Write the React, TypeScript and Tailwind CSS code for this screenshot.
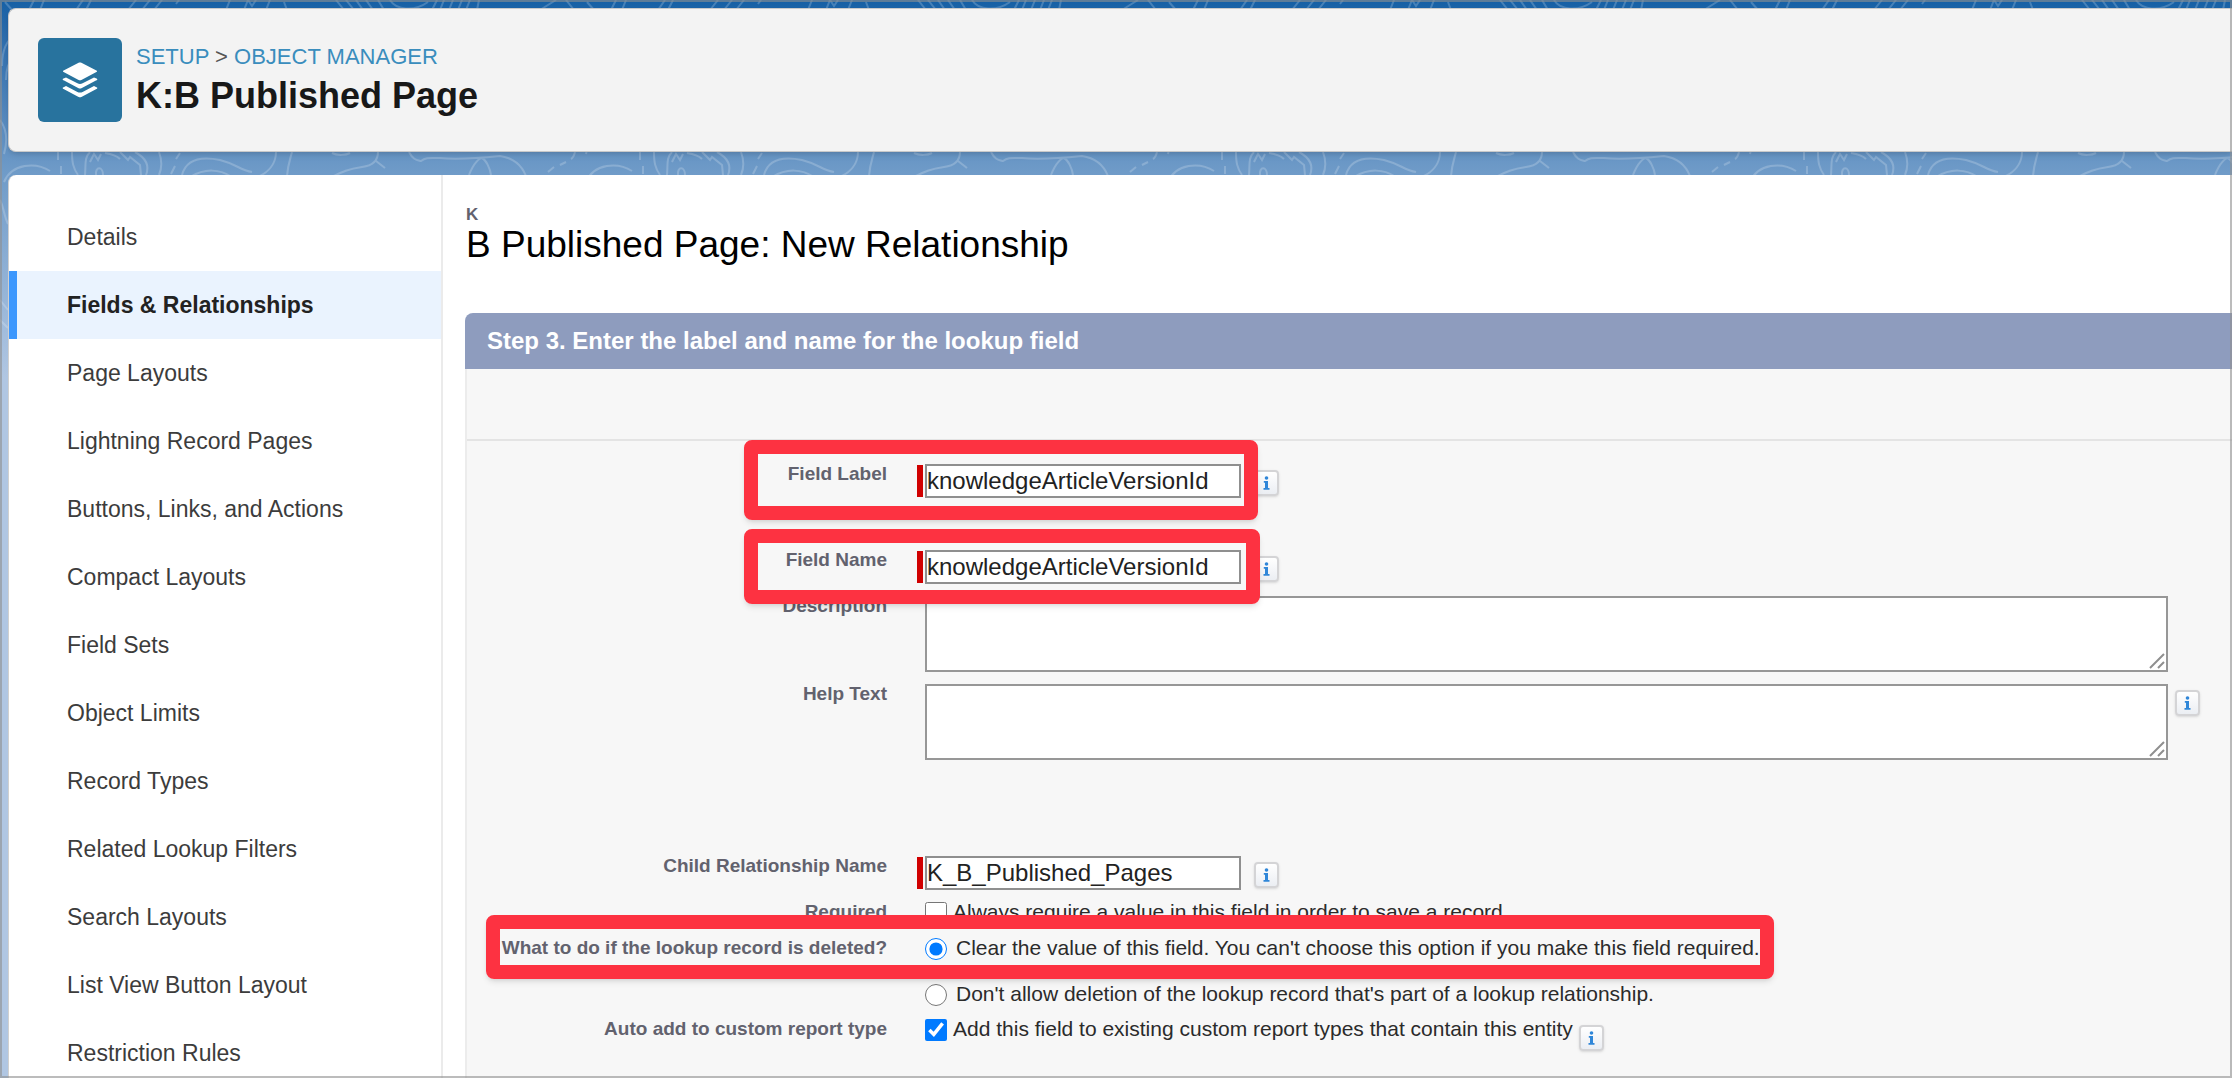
import type { ReactNode } from "react";

const navItems = [
  "Details",
  "Fields & Relationships",
  "Page Layouts",
  "Lightning Record Pages",
  "Buttons, Links, and Actions",
  "Compact Layouts",
  "Field Sets",
  "Object Limits",
  "Record Types",
  "Related Lookup Filters",
  "Search Layouts",
  "List View Button Layout",
  "Restriction Rules",
];

const ObjectIcon = () => (
  <div className="flex size-[84px] shrink-0 items-center justify-center rounded-md bg-[#28739e]">
    <svg width="36" height="36" viewBox="0 0 36 36" fill="#fff">
      <path d="M16.600 .8 1.600 8.400a.9.9 0 0 0 0 1.700l15 7.900c.9.4 1.900.4 2.800 0l15-7.900a.9.9 0 0 0 0-1.700l-15-7.600c-.9-.4-1.900-.4-2.800 0z" />
      <path d="M34.400 16.500 32 15.400 20.600 21.300c-1.600.8-3.600.8-5.200 0L4 15.400 1.600 16.500a.9.9 0 0 0 0 1.800l15 7.900c.9.4 1.900.4 2.800 0l15-7.900a.9.9 0 0 0 0-1.800z" />
      <path d="M34.400 25.200 32 24.100 20.600 30c-1.600.8-3.600.8-5.200 0L4 24.100 1.600 25.200a.9.9 0 0 0 0 1.800l15 7.900c.9.4 1.900.4 2.800 0l15-7.900a.9.9 0 0 0 0-1.800z" />
    </svg>
  </div>
);

// contour lines behind the cards, repeats every 582px
const Contours = () => (
  <svg className="absolute inset-0 h-full w-full" fill="none">
    <defs>
      <pattern id="contours" width="582" height="1078" patternUnits="userSpaceOnUse">
        <g stroke="#fff" strokeOpacity="0.2" strokeWidth="2" fill="none">
          <path d="M12 10 5 2M29 10l5-10M40 10l4-10M76 10l7-10M86 10l5-10M128 10l8-10M142 10l8-10M154 10l8-10M176 4l3-4M226 10l4-10M244 10l4-10l4 6 4-6M266 10l4-10M284 2l3 8M336 0l8 10M346 0l8 10M356 0l7 10M366 0l7 10M378 0l6 10M390 0c6 10 24 12 38 2M432 10l5-10M440 10l4-10M449 10l4-10M458 10l4-10M466 10l4-10M477 10l2-10M540 10l16-10M566 0l8 10" />
          <path d="M16 34C6 40 2 52 2 66M14 56c-6 6-8 14-8 24M0 120c6 8 8 20 4 34M0 200c4 8 4 16 8 24M0 300l8 10M0 320l8 8" />
          <path d="M4 182C12 163 36 162 50 171M58 152v8M61 166v8M72 152c0 10 1 16 6 23M85 175c1-10-1-17 5-23M90 162l4-8 4 6 3-6M96 175c-1-9 7-9 7 0M105 153c6 1 12 3 15 6M120 152l8 8 2-3 10 8 1 10M135 152c11 6 15 13 11 23M159 152c3 8 3 16 0 23M180 153l-4 6M175 166l-4 8M182 175C186 160 200 156 220 160c16 4 20 10 32 12M190 177c15-9 30-8 42 0M276 152c0 12-8 20-16 24M292 152c-2 8-4 12-5 24" />
          <path d="M332 153c6 3 14 2 18 0M378 152c0 10-8 14-16 15-14 2-20 5-28 9M376 161l9 7M409 152c4 8 8 8 12 9 5-4 9-3 19-3 20 2 40 0 60-2 14 2 22 10 26 20M469 175c5-13 11-17 13-17 4 2 8 10 9 17M575 152c-1 4-2 6-4 7M566 162l-6 3M554 167l-6 5" />
        </g>
      </pattern>
    </defs>
    <rect width="100%" height="100%" fill="url(#contours)" />
  </svg>
);

const InfoButton = () => (
  <button
    type="button"
    aria-label="Help"
    className="flex h-[26px] w-[25px] shrink-0 items-center justify-center rounded border-2 border-[#d4d4d6] bg-linear-to-b from-white to-[#ebeef3] shadow-sm"
  >
    <svg width="7" height="14" viewBox="0 0 7 14" fill="#2f86d8">
      <circle cx="3.500" cy="2" r="1.800" />
      <path d="M.8 5h4.200v7h1.500v1.700h-6V12h1.500V6.700H.8z" />
    </svg>
  </button>
);

const Highlight = ({ className }: { className: string }) => (
  <div
    className={`pointer-events-none absolute z-10 rounded-lg border-14 border-[#fd3241] shadow-md ${className}`}
  />
);

const RequiredBar = () => <div className="h-8 w-[6px] bg-[#d00000]" />;

const labelClasses =
  "w-[420px] shrink-0 text-right text-[19px] leading-5 font-bold text-[#62626e]";
const inputClasses =
  "h-[34px] w-[316px] border-2 border-[#8f8f8f] bg-white text-2xl leading-7 text-[#222]";
const optionClasses = "text-[21px] leading-5 text-[#2b2b2b]";

const TextArea = ({ id }: { id: string }) => (
  <div className="relative min-w-0 flex-1">
    <textarea
      id={id}
      className="block h-[76px] w-full resize-none border-2 border-[#979797] bg-white text-2xl"
    />
    <svg
      className="pointer-events-none absolute right-[3px] bottom-[3px]"
      width="16"
      height="16"
      viewBox="0 0 16 16"
      stroke="#8f8f8f"
      strokeWidth="2"
    >
      <path d="M1 15 15 1M9 15l6-6" />
    </svg>
  </div>
);

interface RowProps {
  label?: string;
  htmlFor?: string;
  className: string;
  required?: boolean;
  highlight?: string;
  children: ReactNode;
}

const Row = ({ label, htmlFor, className, required, highlight, children }: RowProps) => (
  <div className={`relative flex items-start ${className}`}>
    {label ? (
      <label htmlFor={htmlFor} className={labelClasses}>
        {label}
      </label>
    ) : (
      <div className="w-[420px] shrink-0" />
    )}
    <div className="flex w-[38px] shrink-0 justify-end pt-[1px] pr-[2px]">
      {required && <RequiredBar />}
    </div>
    {children}
    {highlight && <Highlight className={highlight} />}
  </div>
);

const Sidebar = () => (
  <nav className="w-[434px] shrink-0 border-r-2 border-[#ebebeb] pt-7">
    <ul>
      {navItems.map((item) => (
        <li key={item}>
          <a
            href="#"
            className={`flex h-[68px] items-center border-l-8 pl-[50px] text-[23px] ${
              item === "Fields & Relationships"
                ? "border-[#3c97fd] bg-[#eaf3fe] font-bold text-[#222]"
                : "border-transparent text-[#3c3c3c]"
            }`}
          >
            {item}
          </a>
        </li>
      ))}
    </ul>
  </nav>
);

const FieldForm = () => (
  <form className="flex-1 border-l-2 border-[#ececec] bg-[#f7f7f7]">
    <div className="h-[72px] border-b-2 border-[#e4e4e4]" />
    <div className="pt-[23px]">
      <Row
        label="Field Label"
        htmlFor="label"
        required
        className="h-[86px]"
        highlight="-top-6 left-[277px] h-20 w-[514px]"
      >
        <input id="label" defaultValue="knowledgeArticleVersionId" className={inputClasses} />
        <div className="pt-[6px] pl-[13px]">
          <InfoButton />
        </div>
      </Row>
      <Row
        label="Field Name"
        htmlFor="name"
        required
        className="h-[46px]"
        highlight="-top-[21px] left-[277px] h-[75px] w-[516px]"
      >
        <input id="name" defaultValue="knowledgeArticleVersionId" className={inputClasses} />
        <div className="pt-[6px] pl-[13px]">
          <InfoButton />
        </div>
      </Row>
      <Row label="Description" htmlFor="description" className="h-[88px] pr-16">
        <TextArea id="description" />
      </Row>
      <Row label="Help Text" htmlFor="help" className="h-[172px] pr-8">
        <TextArea id="help" />
        <div className="pt-[6px] pl-[7px]">
          <InfoButton />
        </div>
      </Row>
      <Row label="Child Relationship Name" htmlFor="child" required className="h-[46px]">
        <input id="child" defaultValue="K_B_Published_Pages" className={inputClasses} />
        <div className="pt-[6px] pl-[13px]">
          <InfoButton />
        </div>
      </Row>
      <Row label="Required" htmlFor="required" className="h-9">
        <input id="required" type="checkbox" className="mr-[6px] size-[22px]" />
        <label htmlFor="required" className={optionClasses}>
          Always require a value in this field in order to save a record.
        </label>
      </Row>
      <Row
        label="What to do if the lookup record is deleted?"
        htmlFor="clear"
        className="h-[46px]"
        highlight="-top-[23px] left-[19px] h-16 w-[1288px]"
      >
        <input
          id="clear"
          type="radio"
          name="deleted"
          defaultChecked
          className="mr-[9px] size-[22px] accent-[#007aff]"
        />
        <label htmlFor="clear" className={optionClasses}>
          Clear the value of this field. You can't choose this option if you make this field
          required.
        </label>
      </Row>
      <Row className="h-[35px]">
        <input id="restrict" type="radio" name="deleted" className="mr-[9px] size-[22px]" />
        <label htmlFor="restrict" className={optionClasses}>
          Don't allow deletion of the lookup record that's part of a lookup relationship.
        </label>
      </Row>
      <Row label="Auto add to custom report type" htmlFor="report" className="h-[58px]">
        <input
          id="report"
          type="checkbox"
          defaultChecked
          className="mr-[6px] size-[22px] accent-[#007aff]"
        />
        <label htmlFor="report" className={optionClasses}>
          Add this field to existing custom report types that contain this entity
        </label>
        <div className="pt-[6px] pl-[6px]">
          <InfoButton />
        </div>
      </Row>
    </div>
  </form>
);

const App = () => {
  return (
    <div className="relative flex h-screen flex-col overflow-hidden bg-linear-to-b from-[#1560a5] from-0% via-[#6f9bc8] via-16% to-[#b0c6e2] to-35% pt-2 pl-2 font-['Liberation_Sans',sans-serif]">
      <Contours />
      <header className="relative flex h-36 shrink-0 items-center gap-[14px] rounded-l-lg border border-r-0 border-[#c9c9c9] bg-[#f3f3f3] pl-[29px] shadow-md">
        <ObjectIcon />
        <div className="pt-1">
          <p className="text-[22px] leading-7 text-[#555]">
            <a href="#" className="text-[#3a8dbd]">
              SETUP
            </a>{" "}
            &gt;{" "}
            <a href="#" className="text-[#3a8dbd]">
              OBJECT MANAGER
            </a>
          </p>
          <h1 className="text-4xl leading-[50px] font-bold text-[#181818]">K:B Published Page</h1>
        </div>
      </header>
      <div className="relative mt-[23px] flex min-h-0 flex-1 rounded-tl-lg border-l border-[#d0d0d0] bg-white">
        <Sidebar />
        <main className="flex min-w-0 flex-1 flex-col pl-[22px]">
          <div className="h-[138px] pt-7 pl-[1px]">
            <p className="text-[17px] leading-6 font-bold text-[#62626e]">K</p>
            <h2 className="text-[37px] leading-9 text-black">B Published Page: New Relationship</h2>
          </div>
          <h3 className="h-14 rounded-tl-lg bg-[#8e9cbe] pl-[22px] text-2xl leading-[56px] font-bold text-white">
            Step 3. Enter the label and name for the lookup field
          </h3>
          <FieldForm />
        </main>
      </div>
      <div className="pointer-events-none absolute inset-0 z-20 border-2 border-[#909090]/60" />
    </div>
  );
};

export default App;
